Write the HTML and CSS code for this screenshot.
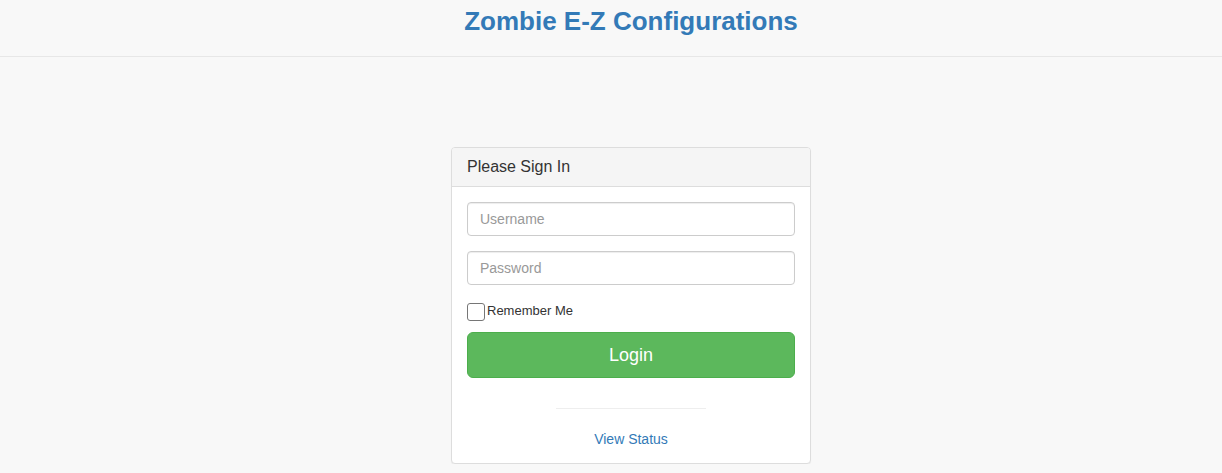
FILE: index.html
```html
<!DOCTYPE html>
<html>
<head>
<meta charset="utf-8">
<link rel="stylesheet" href="styles.css">
</head>
<body>
<header class="navbar">
  <h1 class="brand">Zombie E-Z Configurations</h1>
</header>
<main class="main">
  <div class="panel">
    <div class="panel-heading">Please Sign In</div>
    <div class="panel-body">
      <input class="form-control" type="text" placeholder="Username">
      <input class="form-control" type="password" placeholder="Password">
      <label class="remember"><input class="check" type="checkbox"><span class="remember-text">Remember Me</span></label>
      <button class="btn-login" type="button">Login</button>
      <hr class="divider">
      <div class="status"><a href="#" class="status-link">View Status</a></div>
    </div>
  </div>
</main>
</body>
</html>
```
FILE: styles.css
```css
html, body {
  margin: 0;
  padding: 0;
  background: #f8f8f8;
  font-family: "Liberation Sans", Arial, sans-serif;
  color: #333;
  font-size: 14px;
}
.navbar {
  height: 56px;
  border-bottom: 1px solid #e7e7e7;
  display: flex;
  justify-content: center;
  align-items: flex-start;
  padding-left: 40px;
}
.brand {
  margin: 6px 0 0;
  font-size: 26px;
  font-weight: bold;
  color: #337ab7;
  line-height: 30px;
}
.main {
  display: flex;
  justify-content: center;
  padding-top: 90px;
  padding-left: 40px;
}
.panel {
  width: 358px;
  background: #fff;
  border: 1px solid #ddd;
  border-radius: 4px;
  box-shadow: 0 1px 1px rgba(0,0,0,0.05);
}
.panel-heading {
  background: #f5f5f5;
  border-bottom: 1px solid #ddd;
  border-radius: 3px 3px 0 0;
  padding: 0 15px;
  height: 38px;
  line-height: 38px;
  font-size: 16px;
  color: #333;
}
.panel-body {
  padding: 15px 15px 14px;
  display: flex;
  flex-direction: column;
}
.form-control {
  box-sizing: border-box;
  height: 34px;
  width: 100%;
  margin: 0 0 15px;
  padding: 6px 12px;
  border: 1px solid #ccc;
  border-radius: 4px;
  font-family: inherit;
  font-size: 14px;
  color: #555;
  background: #fff;
  box-shadow: inset 0 1px 1px rgba(0,0,0,0.075);
  outline: none;
}
.form-control::placeholder {
  color: #999;
}
.remember {
  display: flex;
  align-items: flex-start;
  height: 18px;
  margin: 3px 0 0;
  font-size: 13px;
  color: #333;
}
.remember-text {
  line-height: 15px;
}
.check {
  appearance: none;
  -webkit-appearance: none;
  box-sizing: border-box;
  width: 18px;
  height: 18px;
  margin: 0 2px 0 0;
  border: 1px solid #767676;
  border-radius: 3px;
  background: #fff;
}
.btn-login {
  margin-top: 11px;
  box-sizing: border-box;
  height: 46px;
  width: 100%;
  background: #5cb85c;
  border: 1px solid #4cae4c;
  border-radius: 6px;
  color: #fff;
  font-family: inherit;
  font-size: 18px;
}
.divider {
  width: 150px;
  margin: 30px auto 0;
  border: 0;
  border-top: 1px solid #eee;
}
.status {
  text-align: center;
  margin-top: 20px;
  line-height: 20px;
}
.status-link {
  color: #337ab7;
  text-decoration: none;
  font-size: 14px;
}
```
